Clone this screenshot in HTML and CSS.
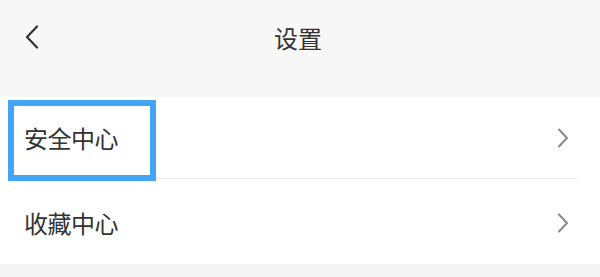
FILE: index.html
```html
<!DOCTYPE html>
<html lang="zh-CN">
<head>
<meta charset="utf-8">
<title>设置</title>
<link rel="stylesheet" href="styles.css">
</head>
<body>
<div class="page">
  <header class="topbar">
    <span class="back">
      <svg width="14" height="24" viewBox="0 0 14 24"><path d="M12 1.5 L2 12 L12 22.5" fill="none" stroke="#333" stroke-width="2.2" stroke-linecap="round" stroke-linejoin="round"/></svg>
    </span>
    <h1 class="title">设置</h1>
  </header>
  <ul class="list">
    <li class="row first">
      <span class="label">安全中心</span>
      <svg class="arrow" width="12" height="20" viewBox="0 0 12 20"><path d="M2 1.5 L10 10 L2 18.5" fill="none" stroke="#8a8a8a" stroke-width="2" stroke-linecap="round" stroke-linejoin="round"/></svg>
      <span class="highlight"></span>
    </li>
    <li class="row">
      <span class="label">收藏中心</span>
      <svg class="arrow" width="12" height="20" viewBox="0 0 12 20"><path d="M2 1.5 L10 10 L2 18.5" fill="none" stroke="#8a8a8a" stroke-width="2" stroke-linecap="round" stroke-linejoin="round"/></svg>
    </li>
  </ul>
</div>
</body>
</html>
```

FILE: styles.css
```css
html, body {
  margin: 0;
  padding: 0;
  background: #f5f5f5;
  font-family: "Noto Sans CJK SC", "Noto Sans", sans-serif;
  color: #333;
}
.page {
  width: 600px;
  height: 277px;
  overflow: hidden;
  background: #f5f5f5;
}
.topbar {
  height: 97px;
  display: flex;
  align-items: flex-start;
  position: relative;
  background: #f7f7f7;
}
.back {
  display: flex;
  margin-left: 25px;
  margin-top: 25px;
}
.title {
  position: absolute;
  left: 0;
  right: 0;
  top: 18px;
  margin: 0;
  text-align: center;
  font-size: 24px;
  font-weight: 400;
  line-height: 40px;
  color: #333;
  transform: translateX(-2px);
}
.list {
  list-style: none;
  margin: 0;
  padding: 0;
  background: #fff;
}
.row {
  position: relative;
  height: 82px;
  display: flex;
  align-items: center;
  justify-content: space-between;
  padding: 0 31px 0 24px;
}
.row.first::after {
  content: "";
  position: absolute;
  left: 24px;
  right: 23px;
  bottom: 0;
  height: 1px;
  background: #e6e6e6;
  z-index: 0;
}
.row + .row {
  height: 83px;
  padding-top: 2px;
}
.label {
  font-size: 24px;
  line-height: 34px;
  color: #333;
  letter-spacing: -0.5px;
}
.arrow {
  display: block;
}
.highlight {
  position: absolute;
  left: 8px;
  top: 3px;
  width: 136px;
  height: 69px;
  border: 6px solid #42a5f5;
  z-index: 2;
}
```
